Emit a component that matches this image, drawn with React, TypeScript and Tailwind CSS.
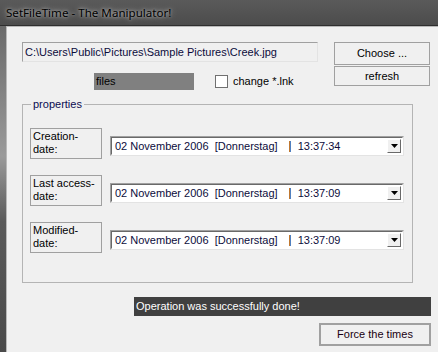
import React from "react";

const font = { fontFamily: '"Liberation Sans", Arial, sans-serif' };

function Picker({ time }: { time: string }) {
  return (
    <div className="flex h-[20px] w-[294px] items-center border border-t-[#a0a0a0] border-l-[#a0a0a0] border-r-[#e3e3e3] border-b-[#e3e3e3] bg-white">
      <div className="flex h-full flex-1 items-center border border-t-[#696969] border-l-[#696969] border-r-white border-b-white pl-[3px] text-[11px] text-[#0c0c3c]">
        <span className="whitespace-pre">02 November 2006  [Donnerstag]</span>
        <span className="ml-[11px] inline-block h-[11px] w-[2px] bg-[linear-gradient(90deg,#c07830_50%,#5080c0_50%)]" />
        <span className="ml-[7px] whitespace-pre">{time}</span>
        <div className="ml-auto mr-[1px] flex h-[14px] w-[14px] items-center justify-center border border-t-white border-l-white border-r-[#696969] border-b-[#696969] bg-[#f0f0f0]">
          <svg width="7" height="4" viewBox="0 0 7 4">
            <path d="M0 0h7L3.5 4z" fill="#000" />
          </svg>
        </div>
      </div>
    </div>
  );
}

function Row({ l1, l2, time }: { l1: string; l2: string; time: string }) {
  return (
    <div className="flex items-start">
      <div className="h-[31px] w-[72px] border border-[#a0a0a0] pl-[2px] pt-[1px] text-[11px] leading-[13px] text-black">
        <div>{l1}</div>
        <div>{l2}</div>
      </div>
      <div className="ml-[8px] mt-[8px]">
        <Picker time={time} />
      </div>
    </div>
  );
}

export default function App() {
  return (
    <div className="flex h-[352px] w-[438px] flex-col overflow-hidden bg-[#4e4e4e]" style={font}>
      <div
        className="flex h-[25px] items-center bg-[linear-gradient(180deg,#5a5a5a,#4c4c4c)] pl-[6px] text-[11.6px] text-black"
        style={{ fontFamily: '"Noto Sans", "Open Sans", sans-serif', textShadow: "0 0 6px rgba(255,255,255,0.6), 0 0 3px rgba(255,255,255,0.5)" }}
      >
        SetFileTime - The Manipulator!
      </div>
      <div className="h-[1px] bg-[#2e2e2e]" />
      <div className="flex flex-1">
        <div className="w-[6px] bg-[linear-gradient(180deg,#6a6a6a,#9a9a9a_40%,#5a5a5a_60%,#4a4a4a)]" />
        <div className="flex flex-1 flex-col border-l border-t border-[#b8b8b8] bg-[#f0f0f0] pl-[15px] pt-[15px]">
          <div className="flex">
            <div className="flex w-[296px] flex-col">
              <div className="flex h-[20px] items-center border border-t-[#a0a0a0] border-l-[#a0a0a0] border-r-[#e3e3e3] border-b-[#e3e3e3] bg-[#f0f0f0] pl-[2px] text-[11px] text-[#0c0c3c]">
                C:\Users\Public\Pictures\Sample Pictures\Creek.jpg
              </div>
              <div className="mt-[11px] flex items-center">
                <div className="ml-[72px] flex h-[17px] w-[100px] items-center bg-[#808080] pl-[2px] text-[11px] text-black">
                  files
                </div>
                <div className="ml-[21px] h-[13px] w-[13px] border border-[#707070] bg-white" />
                <span className="ml-[5px] text-[11px] text-black">change *.lnk</span>
              </div>
            </div>
            <div className="ml-[16px] flex flex-col">
              <div className="flex h-[23px] w-[96px] items-center justify-center border border-[#a0a0a0] bg-[#f0f0f0] text-[11px] text-black">
                Choose ...
              </div>
              <div className="mt-[1px] flex h-[20px] w-[96px] items-center justify-center border border-[#a0a0a0] bg-[#f0f0f0] text-[11px] text-black">
                refresh
              </div>
            </div>
          </div>
          <div className="relative mt-[14px] h-[179px] w-[391px] border border-[#b4b4b4] pl-[7px] pt-[23px]">
            <div className="absolute left-[8px] top-[-8px] bg-[#f0f0f0] px-[2px] text-[11px] leading-[14px] text-[#0c0c50]">
              properties
            </div>
            <div className="flex flex-col gap-[16px]">
              <Row l1="Creation-" l2="date:" time="13:37:34" />
              <Row l1="Last access-" l2="date:" time="13:37:09" />
              <Row l1="Modified-" l2="date:" time="13:37:09" />
            </div>
          </div>
          <div className="ml-[112px] mt-[14px] flex h-[19px] w-[297px] items-center bg-[#404040] pl-[2px] text-[11px] text-white">
            Operation was successfully done!
          </div>
          <div className="ml-[297px] mt-[7px] flex h-[23px] w-[112px] items-center justify-center border-2 border-[#a0a0a0] bg-[#f0f0f0] text-[11px] text-[#1a0010]">
            Force the times
          </div>
        </div>
      </div>
    </div>
  );
}
